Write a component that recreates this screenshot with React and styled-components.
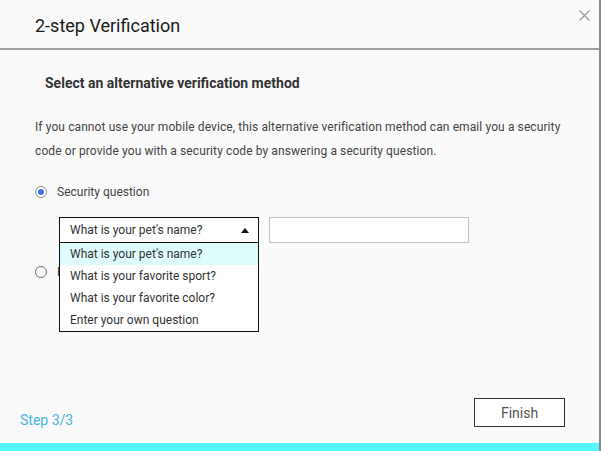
import React from "react";
import styled, { createGlobalStyle } from "styled-components";

const GlobalStyle = createGlobalStyle`
  html, body {
    margin: 0;
    padding: 0;
    background: #fafafa;
  }
  body {
    font-family: Roboto, "Liberation Sans", sans-serif;
  }
`;

const questions = [
  "What is your pet's name?",
  "What is your favorite sport?",
  "What is your favorite color?",
  "Enter your own question",
];

const App = () => {
  return (
    <>
      <GlobalStyle />
      <Dialog>
        <Header>
          <Title>2-step Verification</Title>
          <Close aria-label="close">
            <svg width="11" height="11" viewBox="0 0 11 11">
              <path d="M0.5 0.5 L10.5 10.5 M10.5 0.5 L0.5 10.5" stroke="#9a9a9a" strokeWidth="1.1" />
            </svg>
          </Close>
        </Header>
        <Body>
          <Subtitle>Select an alternative verification method</Subtitle>
          <Description>
            If you cannot use your mobile device, this alternative verification method can email you a security
            code or provide you with a security code by answering a security question.
          </Description>
          <Option>
            <Radio checked />
            <OptionLabel>Security question</OptionLabel>
          </Option>
          <QuestionRow>
            <SelectWrap>
              <Select>
                <span>{questions[0]}</span>
                <Arrow />
              </Select>
              <Menu>
                {questions.map((q, i) => (
                  <MenuItem key={q} $active={i === 0}>
                    {q}
                  </MenuItem>
                ))}
              </Menu>
            </SelectWrap>
            <Answer />
          </QuestionRow>
          <Option $second>
            <Radio />
            <OptionLabel>Email</OptionLabel>
          </Option>
        </Body>
        <Footer>
          <StepText>Step 3/3</StepText>
          <FinishButton>Finish</FinishButton>
        </Footer>
        <BottomBar />
      </Dialog>
    </>
  );
};

const Dialog = styled.div`
  display: flex;
  flex-direction: column;
  width: 601px;
  height: 451px;
  box-sizing: border-box;
  background: #fafafa;
  border-right: 2px solid #8a8a8a;
  overflow: hidden;
`;

const Header = styled.div`
  display: flex;
  justify-content: space-between;
  align-items: flex-start;
  height: 48px;
  padding-left: 35px;
  border-bottom: 2px solid #a0a0a0;
  box-sizing: content-box;
`;

const Title = styled.h1`
  margin: 0;
  padding-top: 15px;
  font-size: 18px;
  font-weight: 400;
  color: #1a1a1a;
`;

const Close = styled.div`
  padding: 10px 9px 0 0;
  line-height: 0;
`;

const Body = styled.div`
  flex: 1;
  display: flex;
  flex-direction: column;
  padding: 25px 35px 0;
`;

const Subtitle = styled.h2`
  margin: 0 0 0 10px;
  font-size: 14px;
  font-weight: 700;
  color: #333;
`;

const Description = styled.p`
  margin: 24px 0 0;
  font-size: 12px;
  letter-spacing: 0.1px;
  line-height: 24px;
  color: #444;
`;

const Option = styled.div`
  display: flex;
  align-items: center;
  gap: 10px;
  margin-top: ${(p) => (p.$second ? "22px" : "22px")};
`;

const Radio = styled.span`
  position: relative;
  width: 10px;
  height: 10px;
  border: 1px solid ${(p) => (p.checked ? "#8c8c8c" : "#707070")};
  border-radius: 50%;
  background: #fff;
  &::after {
    content: "";
    display: ${(p) => (p.checked ? "block" : "none")};
    position: absolute;
    left: 2px;
    top: 2px;
    width: 6px;
    height: 6px;
    border-radius: 50%;
    background: #3b74e0;
  }
`;

const OptionLabel = styled.span`
  font-size: 12px;
  color: #444;
`;

const QuestionRow = styled.div`
  display: flex;
  gap: 10px;
  margin: 18px 0 0 24px;
`;

const SelectWrap = styled.div`
  position: relative;
`;

const Select = styled.div`
  display: flex;
  align-items: center;
  justify-content: space-between;
  width: 200px;
  height: 26px;
  box-sizing: border-box;
  padding: 0 9px 0 10px;
  border: 1px solid #111;
  background: #fff;
  font-size: 12px;
  color: #333;
`;

const Arrow = styled.span`
  width: 0;
  height: 0;
  border-left: 4px solid transparent;
  border-right: 4px solid transparent;
  border-bottom: 5px solid #111;
`;

const Menu = styled.div`
  position: absolute;
  left: 0;
  top: 25px;
  z-index: 2;
  width: 200px;
  box-sizing: border-box;
  border: 1px solid #111;
  background: #fff;
`;

const MenuItem = styled.div`
  height: 22px;
  line-height: 23px;
  padding-left: 10px;
  font-size: 12px;
  color: #333;
  background: ${(p) => (p.$active ? "#defcfc" : "#fff")};
`;

const Answer = styled.input`
  width: 200px;
  height: 26px;
  box-sizing: border-box;
  border: 1px solid #c4c4c4;
  background: #fff;
  outline: none;
`;

const Footer = styled.div`
  display: flex;
  justify-content: space-between;
  align-items: flex-start;
  height: 45px;
  padding: 0 34px 0 20px;
`;

const StepText = styled.span`
  margin-top: 14px;
  font-size: 14px;
  color: #45b6e0;
`;

const FinishButton = styled.button`
  width: 91px;
  height: 29px;
  margin-top: 0;
  border: 1px solid #333;
  background: #fff;
  font-family: Roboto, "Liberation Sans", sans-serif;
  font-size: 14px;
  color: #555;
`;

const BottomBar = styled.div`
  height: 8px;
  background: #55f8fd;
`;

export default App;
